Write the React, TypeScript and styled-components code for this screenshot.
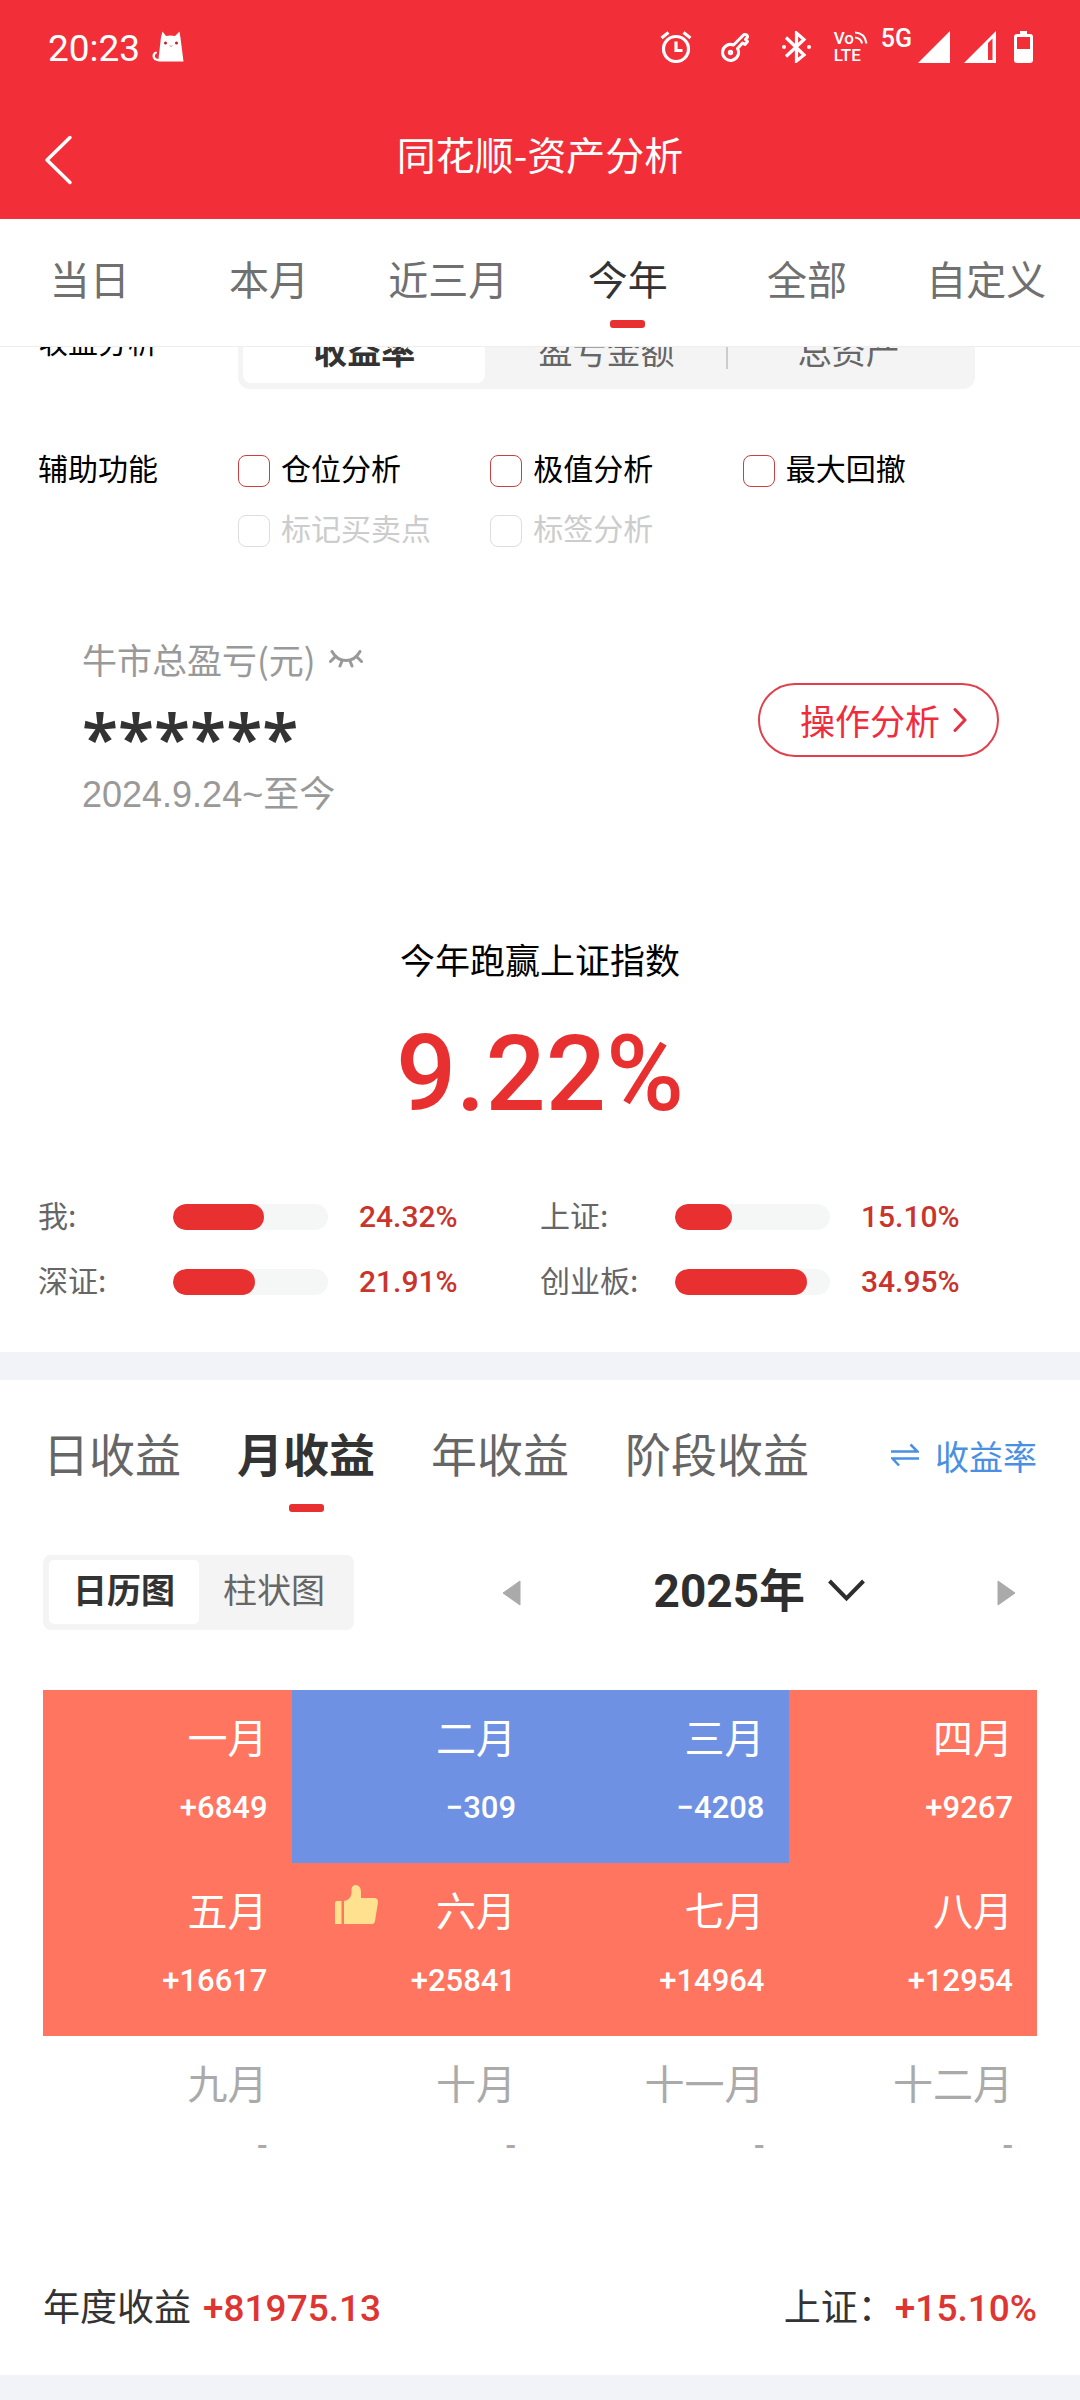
import React, { useState } from "react";
import styled, { createGlobalStyle } from "styled-components";

const numeric = `Roboto, "Noto Sans CJK SC", sans-serif`;

const GlobalStyle = createGlobalStyle`
  *, *::before, *::after { box-sizing: border-box; }
  body {
    margin: 0;
    background: #f2f3f8;
    color: #000;
    font-family: "Noto Sans CJK SC", Roboto, sans-serif;
    font-size: 30px;
  }
  button, select, input { font: inherit; color: inherit; margin: 0; }
  button { background: none; border: 0; padding: 0; cursor: pointer; }
  ul, ol, dl, dd, h1, h2, p { margin: 0; padding: 0; font-weight: inherit; font-size: inherit; }
  ul, ol { list-style: none; }
  svg { display: block; flex: none; }
`;

const Page = styled.div`
  min-height: 100vh;
`;

const Header = styled.header`
  background: #f22f38;
  color: #fff;
`;

const StatusBar = styled.div`
  display: flex;
  align-items: center;
  justify-content: space-between;
  height: 93px;
  padding: 0 47px 0 48px;
  font-family: ${numeric};
`;

const StatusLeft = styled.div`
  display: flex;
  align-items: center;
  gap: 12px;
`;

const Clock = styled.span`
  font-size: 37px;
  line-height: 44px;
  padding-top: 4px;
`;

const StatusRight = styled.div`
  display: flex;
  align-items: center;
`;

const StatusIcon = styled.span<{ $gap: number }>`
  display: flex;
  margin-right: ${(p) => p.$gap}px;
`;

const VoLte = styled.span`
  display: flex;
  flex-direction: column;
  width: 34px;
  margin-right: 13px;
  font-size: 17px;
  font-weight: 500;
  line-height: 17px;
`;

const VoLine = styled.span`
  display: flex;
  align-items: center;
  gap: 1px;
`;

const NetType = styled.span`
  align-self: flex-start;
  margin-right: 6px;
  font-size: 25px;
  font-weight: 500;
  line-height: 18px;
`;

const TitleBar = styled.div`
  display: grid;
  grid-template-columns: 120px 1fr 120px;
  align-items: center;
  height: 126px;
`;

const BackButton = styled.button`
  display: flex;
  align-items: center;
  height: 100%;
  padding: 8px 0 0 44px;
`;

const Title = styled.h1`
  padding-bottom: 6px;
  font-size: 39px;
  line-height: 48px;
  text-align: center;
`;

const RangeTabs = styled.nav`
  display: grid;
  grid-template-columns: repeat(6, 1fr);
  height: 128px;
  padding-right: 4px;
  background: #fff;
  border-bottom: 1px solid #eee;
`;

const RangeTab = styled.button<{ $active: boolean }>`
  display: flex;
  flex-direction: column;
  align-items: center;
  gap: 18px;
  padding-top: 35px;
  font-size: 40px;
  line-height: 48px;
  white-space: nowrap;
  color: ${(p) => (p.$active ? "#333" : "#707070")};
`;

const Marker = styled.span`
  width: 35px;
  height: 8px;
  border-radius: 3px;
  background: #e93030;
`;

const Viewport = styled.main`
  overflow: hidden;
`;

/* The list is scrolled: its first row is partly under the range tabs. */
const Analysis = styled.section`
  margin-top: -38px;
  padding: 0 38px;
  background: #fff;
`;

const FormRow = styled.div<{ $top?: number }>`
  display: grid;
  grid-template-columns: 200px 1fr;
  align-items: start;
  margin-top: ${(p) => p.$top ?? 0}px;
`;

const RowLabel = styled.span<{ $line: number }>`
  line-height: ${(p) => p.$line}px;
`;

const MetricSwitch = styled.div`
  display: grid;
  grid-template-columns: repeat(3, 1fr);
  height: 80px;
  margin-right: 67px;
  padding: 6px 5px;
  border-radius: 12px;
  background: #f4f4f4;
`;

const MetricOption = styled.button<{ $active?: boolean; $divided?: boolean }>`
  display: flex;
  align-items: center;
  justify-content: center;
  border-radius: 8px;
  font-size: 34px;
  font-weight: ${(p) => (p.$active ? 700 : 400)};
  color: ${(p) => (p.$active ? "#333" : "#666")};
  background: ${(p) =>
    p.$active
      ? "#fff"
      : p.$divided
        ? "linear-gradient(#ccc, #ccc) right center / 2px 40px no-repeat"
        : "none"};
`;

const CheckGrid = styled.div`
  display: grid;
  grid-template-columns: repeat(3, 1fr);
  gap: 28px 0;
  margin-right: 47px;
`;

const CheckLabel = styled.label<{ $disabled?: boolean }>`
  display: flex;
  align-items: flex-start;
  gap: 11px;
  height: 32px;
  line-height: 24px;
  white-space: nowrap;
  color: ${(p) => (p.$disabled ? "#ccc" : "#000")};
`;

const CheckBox = styled.input`
  appearance: none;
  flex: none;
  width: 32px;
  height: 32px;
  border: 1px solid #c9403f;
  border-radius: 8px;
  background: #fff;
  &:checked { background: #e93030; }
  &:disabled { border-color: #ddd; }
`;

const BullCard = styled.div`
  display: flex;
  justify-content: space-between;
  align-items: flex-start;
  margin-top: 88px;
  padding: 0 43px 0 44px;
  color: #999;
`;

const BullTitle = styled.div`
  display: flex;
  align-items: center;
  gap: 13px;
  font-size: 35px;
  line-height: 48px;
`;

const IconButton = styled.button`
  display: flex;
`;

const Masked = styled.p`
  padding-top: 18px;
  font-family: "Noto Sans", sans-serif;
  font-size: 66px;
  font-weight: 600;
  line-height: 72px;
  color: #333;
`;

const Period = styled.p`
  font-family: "Liberation Sans", "Noto Sans CJK SC", sans-serif;
  font-size: 36px;
  line-height: 44px;
`;

const OutlineButton = styled.button`
  display: flex;
  align-items: center;
  gap: 13px;
  height: 74px;
  margin-top: 48px;
  padding: 0 30px 0 40px;
  border: 2px solid #e0404c;
  border-radius: 37px;
  font-size: 35px;
  line-height: 48px;
  color: #f02c3c;
`;

const Beat = styled.div`
  margin-top: 118px;
  text-align: center;
`;

const BeatLabel = styled.h2`
  font-size: 35px;
  line-height: 48px;
`;

const BeatValue = styled.p`
  margin-top: 31px;
  font-family: ${numeric};
  font-size: 106px;
  font-weight: 500;
  line-height: 120px;
  color: #e93030;
`;

const Stats = styled.dl`
  display: grid;
  grid-template-columns: 1fr 1fr;
  margin-top: 50px;
  padding-bottom: 38px;
`;

const Stat = styled.div`
  display: grid;
  grid-template-columns: 135px 155px 1fr;
  align-items: center;
  height: 65px;
`;

const StatName = styled.dt`
  padding-bottom: 6px;
  color: #666;
`;

const Track = styled.dd`
  height: 26px;
  border-radius: 13px;
  background: #f5f6f6;
  overflow: hidden;
`;

const Fill = styled.div`
  height: 100%;
  border-radius: 13px;
  background: #e93030;
`;

const StatValue = styled.dd`
  padding-left: 31px;
  font-family: ${numeric};
  font-weight: 500;
  color: #c9342d;
`;

const Profit = styled.section`
  margin-top: 28px;
  padding: 40px 43px 46px;
  background: #fff;
`;

const ProfitTabs = styled.div`
  display: flex;
  align-items: flex-start;
  gap: 56px;
`;

const ProfitTab = styled.button<{ $active: boolean }>`
  display: flex;
  flex-direction: column;
  align-items: center;
  gap: 20px;
  height: 92px;
  font-size: 46px;
  line-height: 64px;
  white-space: nowrap;
  font-weight: ${(p) => (p.$active ? 700 : 400)};
  color: ${(p) => (p.$active ? "#333" : "#666")};
`;

const UnitToggle = styled.button`
  display: flex;
  align-items: center;
  gap: 16px;
  height: 70px;
  margin-left: auto;
  font-size: 34px;
  white-space: nowrap;
  color: #4a90e2;
`;

const Toolbar = styled.div`
  display: flex;
  align-items: center;
  margin-top: 43px;
`;

const ViewSwitch = styled.div`
  display: grid;
  grid-template-columns: 150px 150px;
  height: 75px;
  padding: 5px 5px 6px 6px;
  border-radius: 8px;
  background: #f4f4f4;
`;

const ViewOption = styled.button<{ $active: boolean }>`
  padding-bottom: 8px;
  border-radius: 5px;
  font-size: 34px;
  font-weight: ${(p) => (p.$active ? 700 : 400)};
  color: ${(p) => (p.$active ? "#333" : "#666")};
  background: ${(p) => (p.$active ? "#fff" : "transparent")};
`;

const YearNav = styled.div`
  flex: 1;
  display: flex;
  align-items: center;
  justify-content: space-between;
  margin-left: 148px;
  padding-right: 21px;
`;

const YearPicker = styled.label`
  display: flex;
  align-items: center;
  gap: 22px;
`;

const YearSelect = styled.select`
  appearance: none;
  padding: 0 0 4px;
  border: 0;
  background: none;
  font-family: ${numeric};
  font-size: 46px;
  font-weight: 700;
  line-height: 60px;
  color: #2e2e2e;
`;

const Calendar = styled.ol`
  display: grid;
  grid-template-columns: repeat(4, 1fr);
  margin-top: 60px;
`;

const tones = { up: "#ff755f", down: "#6e91e4", none: "transparent" };
type Tone = keyof typeof tones;

const Month = styled.li<{ $tone: Tone }>`
  height: 173px;
  padding: 22px 24px 0 43px;
  text-align: right;
  color: ${(p) => (p.$tone === "none" ? "#aaa" : "#fff")};
  background: ${(p) => tones[p.$tone]};
`;

const MonthHead = styled.div`
  display: flex;
  align-items: flex-start;
  height: 48px;
`;

const MonthName = styled.span`
  margin-left: auto;
  font-size: 40px;
  line-height: 48px;
`;

const MonthValue = styled.div<{ $empty: boolean }>`
  margin-top: ${(p) => (p.$empty ? 20 : 28)}px;
  font-family: ${numeric};
  font-size: 31px;
  font-weight: 500;
  line-height: 40px;
`;

const Summary = styled.div`
  display: flex;
  justify-content: space-between;
  height: 48px;
  margin-top: 72px;
  font-size: 37px;
  line-height: 48px;
  color: #333;
`;

const SummaryItem = styled.div<{ $gap: number }>`
  display: flex;
  align-items: baseline;
  gap: ${(p) => p.$gap}px;
`;

const Gain = styled.span`
  font-family: ${numeric};
  font-weight: 500;
  line-height: 40px;
  color: #de3533;
`;

const Cat = () => (
  <svg width="32" height="31" viewBox="0 0 32 31" fill="#fff">
    <path d="M9 6 L10.500 .5 L14 5 Q18.500 4 23 5 L27.500 .5 L28.500 7 L31.500 30.500 H7 Q.5 29.500 .5 25 Q.5 21 4.500 20.500 L5 22 Q2.500 23 2.800 25.500 Q3.200 27.500 6.500 28 Z" />
    <circle cx="13.500" cy="12" r="1.500" fill="#b8222b" />
    <circle cx="24.500" cy="12" r="1.500" fill="#b8222b" />
    <path d="M17.500 14.500 Q19 16.500 20.500 14.500" stroke="#f0868c" fill="none" />
  </svg>
);

const Alarm = () => (
  <svg width="32" height="32" viewBox="0 0 32 32" fill="none" stroke="#fff" strokeWidth="3.200">
    <circle cx="16" cy="18" r="12.500" />
    <path d="M16 10.500 V19.500 H22.500 M1.500 7 L8.500 1.500 M30.500 7 L23.500 1.500" />
  </svg>
);

const Key = () => (
  <svg width="28" height="30" viewBox="0 0 28 30" fill="none" stroke="#fff" strokeWidth="3" strokeLinejoin="round">
    <path d="M12.500 13 L23 2.500 Q26.500 2 26.500 5 L24.500 7.500 L26.500 9.500 L24 12.500 L21.500 11 L16.500 16.500 A8 8 0 1 1 12.500 13 Z" />
    <circle cx="9.500" cy="20.500" r="1.200" />
  </svg>
);

const Bluetooth = () => (
  <svg width="29" height="32" viewBox="0 0 29 32" fill="none" stroke="#fff" strokeWidth="3.200">
    <path d="M4 6.500 L22 24 L14.500 30 V2 L22 8.500 L4 25.500" />
    <circle cx="2" cy="16" r="2" fill="#fff" stroke="none" />
    <circle cx="27" cy="16" r="2" fill="#fff" stroke="none" />
  </svg>
);

const Waves = () => (
  <svg width="13" height="14" viewBox="0 0 13 14" fill="none" stroke="#fff" strokeWidth="2">
    <path d="M0 1.500 Q10 2 11.500 12.500 M0 6.500 Q6 7 7 12.500" />
  </svg>
);

const Signal = ({ partial }: { partial?: boolean }) => (
  <svg width="32" height="32" viewBox="0 0 32 32">
    <path d="M0 32 L32 0 V32 Z" fill="#fff" />
    {partial && <path d="M24 12 L28.500 7.500 V29 H24 Z" fill="#f22f38" />}
  </svg>
);

const Battery = () => (
  <svg width="19" height="32" viewBox="0 0 19 32">
    <path fill="#fff" d="M6 0 H13 V3 H16 Q19 3 19 6 V29 Q19 32 16 32 H3 Q0 32 0 29 V6 Q0 3 3 3 H6 Z" />
    <rect x="3" y="6" width="13" height="12" fill="#f22f38" />
  </svg>
);

const BackArrow = () => (
  <svg width="29" height="50" viewBox="0 0 29 50" fill="none" stroke="#fff" strokeWidth="3.500" strokeLinecap="round" strokeLinejoin="round">
    <path d="M26 2.500 L3 25 L26 47.500" />
  </svg>
);

const ClosedEye = () => (
  <svg width="34" height="18" viewBox="0 0 34 18" fill="none" stroke="#999" strokeWidth="3" strokeLinecap="round">
    <path d="M3 1.500 Q8 10.500 17 10.500 T31 1.500 M5.500 7.500 L1.500 11.500 M28.500 7.500 L32.500 11.500 M13 11 L11 16 M21 11 L23 16" />
  </svg>
);

const SmallArrow = () => (
  <svg width="14" height="24" viewBox="0 0 14 24" fill="none" stroke="#e8303e" strokeWidth="3" strokeLinecap="round" strokeLinejoin="round">
    <path d="M2 1.500 L12 12 L2 22.500" />
  </svg>
);

const Swap = () => (
  <svg width="28" height="24" viewBox="0 0 28 24" fill="none" stroke="#4a90e2" strokeWidth="2.500">
    <path d="M0 8.500 H26.500 L19.500 1.500 M28 15.500 H1.500 L8 22.500" />
  </svg>
);

const Triangle = ({ right }: { right?: boolean }) => (
  <svg width="19" height="26" viewBox="0 0 19 26" fill="#aaa" stroke="#aaa" strokeLinejoin="round">
    <path d={right ? "M1 1 L18 13 L1 25 Z" : "M18 1 L1 13 L18 25 Z"} />
  </svg>
);

const ChevronDown = () => (
  <svg width="37" height="28" viewBox="0 0 37 28" fill="none" stroke="#2e2e2e" strokeWidth="4">
    <path d="M1.500 2 L18.500 19.500 L35.500 2" />
  </svg>
);

const Thumb = () => (
  <svg width="43" height="39" viewBox="0 0 43 39" fill="#ffe190">
    <path d="M0 18 Q0 16 2 16 H6.500 V39 H0 Z M9 16 Q15 15 16.500 9 V4 Q17 0 21 0 Q26 1 26 7 V13 H40 Q43 13.500 43 17 L40 36 Q39.500 39 37 39 H9 Z" />
  </svg>
);

const ranges = ["当日", "本月", "近三月", "今年", "全部", "自定义"];

const checks = [
  { text: "仓位分析" },
  { text: "极值分析" },
  { text: "最大回撤" },
  { text: "标记买卖点", disabled: true },
  { text: "标签分析", disabled: true },
];

const stats = [
  { name: "我:", value: "24.32%", fill: 59 },
  { name: "上证:", value: "15.10%", fill: 37 },
  { name: "深证:", value: "21.91%", fill: 53 },
  { name: "创业板:", value: "34.95%", fill: 85 },
];

const profitTabs = ["日收益", "月收益", "年收益", "阶段收益"];

const months: { name: string; value: string; tone: Tone; best?: boolean }[] = [
  { name: "一月", value: "+6849", tone: "up" },
  { name: "二月", value: "−309", tone: "down" },
  { name: "三月", value: "−4208", tone: "down" },
  { name: "四月", value: "+9267", tone: "up" },
  { name: "五月", value: "+16617", tone: "up" },
  { name: "六月", value: "+25841", tone: "up", best: true },
  { name: "七月", value: "+14964", tone: "up" },
  { name: "八月", value: "+12954", tone: "up" },
  { name: "九月", value: "-", tone: "none" },
  { name: "十月", value: "-", tone: "none" },
  { name: "十一月", value: "-", tone: "none" },
  { name: "十二月", value: "-", tone: "none" },
];

export default function App() {
  const [range, setRange] = useState("今年");
  const [tab, setTab] = useState("月收益");
  const [view, setView] = useState("日历图");

  return (
    <Page>
      <GlobalStyle />
      <Header>
        <StatusBar>
          <StatusLeft>
            <Clock>20:23</Clock>
            <Cat />
          </StatusLeft>
          <StatusRight>
            <StatusIcon $gap={29}><Alarm /></StatusIcon>
            <StatusIcon $gap={33}><Key /></StatusIcon>
            <StatusIcon $gap={23}><Bluetooth /></StatusIcon>
            <VoLte>
              <VoLine>Vo<Waves /></VoLine>
              <span>LTE</span>
            </VoLte>
            <NetType>5G</NetType>
            <StatusIcon $gap={14}><Signal /></StatusIcon>
            <StatusIcon $gap={18}><Signal partial /></StatusIcon>
            <Battery />
          </StatusRight>
        </StatusBar>
        <TitleBar>
          <BackButton aria-label="返回"><BackArrow /></BackButton>
          <Title>同花顺-资产分析</Title>
        </TitleBar>
      </Header>

      <RangeTabs>
        {ranges.map((r) => (
          <RangeTab key={r} $active={r === range} onClick={() => setRange(r)}>
            {r}
            {r === range && <Marker />}
          </RangeTab>
        ))}
      </RangeTabs>

      <Viewport>
        <Analysis>
          <FormRow>
            <RowLabel $line={62}>收益分析</RowLabel>
            <MetricSwitch>
              <MetricOption $active>收益率</MetricOption>
              <MetricOption $divided>盈亏金额</MetricOption>
              <MetricOption>总资产</MetricOption>
            </MetricSwitch>
          </FormRow>
          <FormRow $top={66}>
            <RowLabel $line={24}>辅助功能</RowLabel>
            <CheckGrid>
              {checks.map((c) => (
                <CheckLabel key={c.text} $disabled={c.disabled}>
                  <CheckBox type="checkbox" disabled={c.disabled} />
                  {c.text}
                </CheckLabel>
              ))}
            </CheckGrid>
          </FormRow>

          <BullCard>
            <div>
              <BullTitle>
                牛市总盈亏(元)
                <IconButton aria-label="显示金额"><ClosedEye /></IconButton>
              </BullTitle>
              <Masked>******</Masked>
              <Period>2024.9.24~至今</Period>
            </div>
            <OutlineButton>
              操作分析
              <SmallArrow />
            </OutlineButton>
          </BullCard>

          <Beat>
            <BeatLabel>今年跑赢上证指数</BeatLabel>
            <BeatValue>9.22%</BeatValue>
          </Beat>

          <Stats>
            {stats.map((s) => (
              <Stat key={s.name}>
                <StatName>{s.name}</StatName>
                <Track><Fill style={{ width: `${s.fill}%` }} /></Track>
                <StatValue>{s.value}</StatValue>
              </Stat>
            ))}
          </Stats>
        </Analysis>

        <Profit>
          <ProfitTabs>
            {profitTabs.map((t) => (
              <ProfitTab key={t} $active={t === tab} onClick={() => setTab(t)}>
                {t}
                {t === tab && <Marker />}
              </ProfitTab>
            ))}
            <UnitToggle>
              <Swap />
              收益率
            </UnitToggle>
          </ProfitTabs>

          <Toolbar>
            <ViewSwitch>
              {["日历图", "柱状图"].map((v) => (
                <ViewOption key={v} $active={v === view} onClick={() => setView(v)}>
                  {v}
                </ViewOption>
              ))}
            </ViewSwitch>
            <YearNav>
              <IconButton aria-label="上一年"><Triangle /></IconButton>
              <YearPicker>
                <YearSelect aria-label="年份" defaultValue="2025">
                  <option value="2025">2025年</option>
                </YearSelect>
                <ChevronDown />
              </YearPicker>
              <IconButton aria-label="下一年"><Triangle right /></IconButton>
            </YearNav>
          </Toolbar>

          <Calendar>
            {months.map((m) => (
              <Month key={m.name} $tone={m.tone}>
                <MonthHead>
                  {m.best && <Thumb />}
                  <MonthName>{m.name}</MonthName>
                </MonthHead>
                <MonthValue $empty={m.tone === "none"}>{m.value}</MonthValue>
              </Month>
            ))}
          </Calendar>

          <Summary>
            <SummaryItem $gap={12}>年度收益<Gain>+81975.13</Gain></SummaryItem>
            <SummaryItem $gap={0}>上证：<Gain>+15.10%</Gain></SummaryItem>
          </Summary>
        </Profit>
      </Viewport>
    </Page>
  );
}
